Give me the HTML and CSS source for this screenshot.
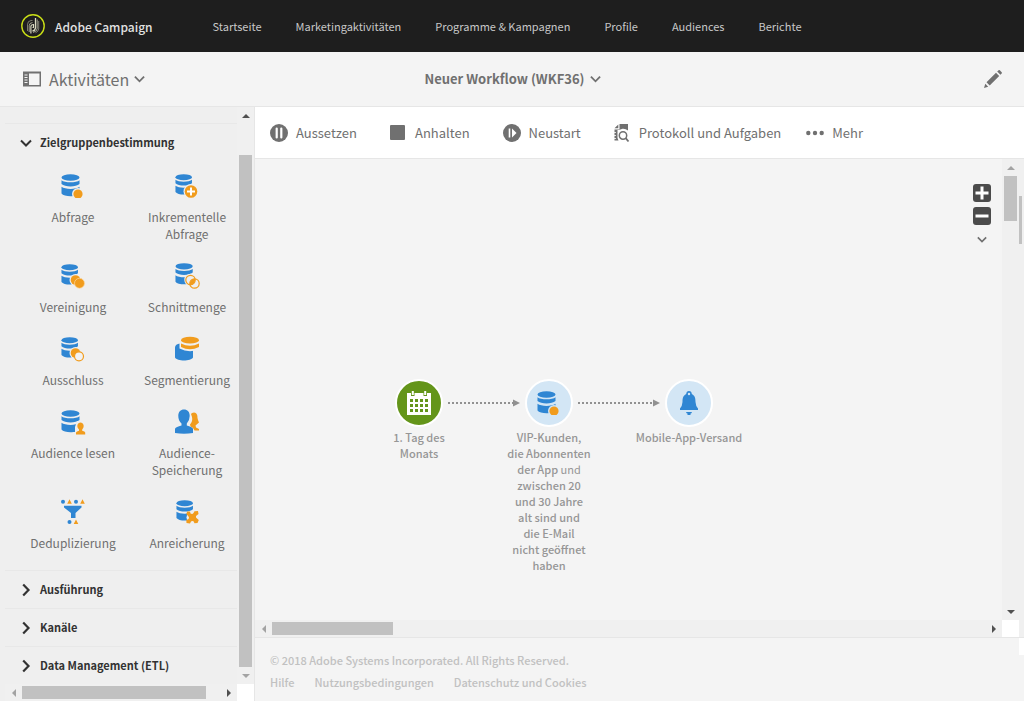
FILE: index.html
```html
<!DOCTYPE html>
<html lang="de">
<head>
<meta charset="utf-8">
<meta name="viewport" content="width=device-width, initial-scale=1">
<title>Adobe Campaign – Neuer Workflow (WKF36)</title>
<link rel="stylesheet" href="styles.css">
</head>
<body>
<svg class="sprite" aria-hidden="true">
  <symbol id="db" viewBox="0 0 24 24">
    <ellipse cx="9.500" cy="3.500" rx="9" ry="3.300" fill="#2f86d3"/>
    <path d="M.5 6.300C3.500 9 15.500 9 18.500 6.300V10C15 13.300 4 13.300.5 10Z" fill="#2f86d3"/>
    <path d="M.5 12.800C4 15.600 15 15.600 18.500 12.800V19.500C16 23.200 3 23.200.5 19.500Z" fill="#2f86d3"/>
  </symbol>
  <symbol id="chev-down" viewBox="0 0 12 8"><path d="M1 1.500l5 5 5-5" fill="none" stroke="currentColor" stroke-width="2"/></symbol>
  <symbol id="chev-right" viewBox="0 0 8 14"><path d="M1.200 1.500L6.500 7l-5.300 5.500" fill="none" stroke="currentColor" stroke-width="2.200"/></symbol>
  <symbol id="query" viewBox="0 0 24 24">
    <use href="#db" width="24" height="24"/>
    <circle class="halo" cx="17" cy="20" r="6"/><circle cx="17" cy="20" r="4.600" fill="#f19c1d"/>
  </symbol>
</svg>

<header class="topbar">
  <a class="brand" href="#">
    <svg class="brand-logo" viewBox="0 0 24 24" aria-hidden="true">
      <circle cx="12" cy="12" r="11.200" fill="none" stroke="#c9de17" stroke-width="1.400"/>
      <g fill="none" stroke="#d8d8c0">
        <path d="M6.500 17V10.500Q6.500 7 10 6.500H11.500" stroke-width=".5"/>
        <path d="M8.200 18V11.500Q8.200 9 11.500 8.500" stroke-width=".7"/>
        <path d="M9.900 19.500V12.500Q10 10.500 12.500 10.500V13.500H11.500" stroke-width="1.200"/>
        <path d="M14.500 4V14Q14 16.500 11.500 17" stroke-width="1.300"/>
        <path d="M16.200 5.500V14.500Q16 17.500 12 18.500" stroke-width=".7"/>
        <path d="M17.700 7V15Q17 18 14.500 18.800" stroke-width=".5"/>
      </g>
    </svg>
    <span>Adobe Campaign</span>
  </a>
  <nav class="nav">
    <a href="#">Startseite</a>
    <a href="#">Marketingaktivitäten</a>
    <a href="#">Programme &amp; Kampagnen</a>
    <a href="#">Profile</a>
    <a href="#">Audiences</a>
    <a href="#">Berichte</a>
  </nav>
</header>

<div class="subbar">
  <button class="rail-toggle" type="button">
    <svg class="icon-rail" viewBox="0 0 18 16" aria-hidden="true"><path d="M0 .5H18V15.500H0ZM6 2.500V14H16.500V2.500Z" fill="currentColor" fill-rule="evenodd"/><path d="M1.500 4H4.500M1.500 6.500H4.500M1.500 9H4.500M1.500 11.500H4.500" stroke="#f4f4f4"/></svg>
    <span>Aktivitäten</span>
    <svg class="chev" aria-hidden="true"><use href="#chev-down"/></svg>
  </button>
  <button class="title" type="button">
    <span>Neuer Workflow (WKF36)</span>
    <svg class="chev" aria-hidden="true"><use href="#chev-down"/></svg>
  </button>
  <button class="edit" type="button" aria-label="Bearbeiten">
    <svg class="icon18" viewBox="0 0 18 18" aria-hidden="true"><path d="M0 18L1.300 13.800 4.200 16.700ZM2.500 12.300L12 2.800 15.200 6 5.700 15.500ZM13.200 1.600L14.600.3Q15.200-.2 15.800.3L17.700 2.200Q18.200 2.800 17.700 3.400L16.400 4.800Z" fill="currentColor"/></svg>
  </button>
</div>

<div class="workspace">
  <aside class="sidebar">
    <div class="rail-edge"></div>
    <div class="palette">
      <section class="group">
        <button class="group-head" type="button"><svg class="chev-open" aria-hidden="true"><use href="#chev-down"/></svg><span>Zielgruppenbestimmung</span></button>
        <div class="activities">
          <button class="activity" type="button">
            <svg viewBox="0 0 24 26" aria-hidden="true"><use href="#query" width="24" height="24" y="1"/></svg>
            <span>Abfrage</span>
          </button>
          <button class="activity" type="button">
            <svg viewBox="0 0 24 26" aria-hidden="true"><use href="#db" width="22" height="22" y="1"/><circle class="halo" cx="16" cy="18.500" r="7.500"/><circle cx="16" cy="18.500" r="6.300" fill="#f19c1d"/><path d="M12 18.500H20M16 14.500V22.500" stroke="#fff" stroke-width="2"/></svg>
            <span>Inkrementelle Abfrage</span>
          </button>
          <button class="activity" type="button">
            <svg viewBox="0 0 24 26" aria-hidden="true"><use href="#db" width="22" height="22" y="1"/><circle class="halo" cx="14.500" cy="17" r="6"/><circle class="halo" cx="18.500" cy="20.500" r="6"/><circle cx="14.500" cy="17" r="4.800" fill="#f19c1d"/><circle cx="18.500" cy="20.300" r="5" fill="#f19c1d" stroke="#fbd9a5" stroke-width=".7"/></svg>
            <span>Vereinigung</span>
          </button>
          <button class="activity" type="button">
            <svg viewBox="0 0 24 26" aria-hidden="true"><use href="#db" width="23" height="23" y="0"/><circle class="halo" cx="15.500" cy="17" r="6.200"/><circle class="halo" cx="19.500" cy="20.500" r="6"/><path d="M14.950 21.670A4.700 4.700 0 0 1 20.050 15.830A4.700 4.700 0 0 1 14.950 21.670Z" fill="#f19c1d"/><g fill="none" stroke="#f19c1d" stroke-width="1.200"><circle cx="15.500" cy="17" r="4.700"/><circle cx="19.500" cy="20.500" r="4.700"/></g></svg>
            <span>Schnittmenge</span>
          </button>
          <button class="activity" type="button">
            <svg viewBox="0 0 24 26" aria-hidden="true"><use href="#db" width="22" height="22" y="1"/><circle class="halo" cx="14.500" cy="17" r="6"/><circle class="halo" cx="18" cy="20.300" r="5.800"/><circle cx="14.500" cy="17" r="4.800" fill="#f19c1d"/><circle cx="18" cy="20.300" r="4.500" fill="#f2f2f2" stroke="#f19c1d" stroke-width="1.200"/></svg>
            <span>Ausschluss</span>
          </button>
          <button class="activity" type="button">
            <svg viewBox="0 0 24 26" aria-hidden="true"><path d="M0 11.500C0 9 2 8 5 7.500V11Q9 14.500 18 14.500V21.500C16 25.500 2 25.500 0 21.500Z" fill="#2f86d3"/><path class="halo" d="M4.500 3H25.500V13Q14 17.500 4.500 12.500Z"/><ellipse cx="15" cy="4.200" rx="9" ry="3.400" fill="#f19c1d"/><path d="M6 7.500Q15 12 24 7.500V11Q15 15.500 6 11Z" fill="#f19c1d"/></svg>
            <span>Segmentierung</span>
          </button>
          <button class="activity" type="button">
            <svg viewBox="0 0 24 26" aria-hidden="true"><use href="#db" width="24" height="24" y="1"/><path class="halo" d="M14 26V18L16 12H22L25 26Z"/><path d="M15 25.500V23.500Q15.500 22.200 18 21.800V20.500C15 17.500 16.500 13.500 19.500 13.500S24 17.500 21.200 20.500V21.800Q24 22.200 24.200 23.500V25.500Z" fill="#f19c1d"/></svg>
            <span>Audience lesen</span>
          </button>
          <button class="activity" type="button">
            <svg viewBox="0 0 24 26" aria-hidden="true"><path d="M16 5Q16.500 3.500 19 3.500C22.500 4 22.500 7 22.500 9Q22.800 11 24 13.500L20.500 16.500 21 18.500 24 20V21.500H19.500Q18.500 18.500 15.500 17.500L15 15.500Q18 12 17 8Z" fill="#f19c1d"/><path d="M0 24V19.800Q1 17.800 6.500 16.500V14.500Q3.300 11.500 3.300 7C3.300 2.800 5.500.5 9 .5S14.700 2.800 14.700 7Q14.700 11.500 11.800 14.500V16.500Q17 17.800 18 19.800V24Q9 25.500 0 24Z" fill="#2f86d3"/></svg>
            <span>Audience-Speicherung</span>
          </button>
          <button class="activity" type="button">
            <svg viewBox="0 0 24 26" aria-hidden="true"><g fill="#2f86d3"><circle cx="2" cy="2.800" r="2"/><circle cx="15" cy="2.800" r="2"/><circle cx="8.500" cy="23" r="2"/><path d="M3 6.800H20.500V8.500L14.500 14V19H10V14L3 8.500Z"/></g><path d="M8.500.2L10.800 4.700H6.200ZM21.500.2L23.800 4.700H19.200ZM15 20.500L17.300 25H12.700Z" fill="#f19c1d"/></svg>
            <span>Deduplizierung</span>
          </button>
          <button class="activity" type="button">
            <svg viewBox="0 0 24 26" aria-hidden="true"><use href="#db" width="22" height="22" x="1" y="1"/><circle class="halo" cx="17.500" cy="18.500" r="6"/><path d="M12.200 12.500L15 12.500 15.500 14.500Q17.500 15.500 18.500 14L19.500 12.200 23 12 23.500 15 21 17Q20.500 18.500 22 19.500L23.800 21 22.500 24 19.500 24.200 18.500 22.200Q17 21.500 16 22.500L15 24.500 11.500 24 11.300 21 13.500 20Q14.500 18.500 13.500 17.500L11.300 15Z" fill="#f19c1d"/></svg>
            <span>Anreicherung</span>
          </button>
        </div>
      </section>
      <button class="group-head" type="button"><svg class="chev-closed" aria-hidden="true"><use href="#chev-right"/></svg><span>Ausführung</span></button>
      <button class="group-head" type="button"><svg class="chev-closed" aria-hidden="true"><use href="#chev-right"/></svg><span>Kanäle</span></button>
      <button class="group-head" type="button"><svg class="chev-closed" aria-hidden="true"><use href="#chev-right"/></svg><span>Data Management (ETL)</span></button>
    </div>
    <div class="vscroll"><i class="arrow up dark"></i><div class="track"><div class="thumb side-v"></div></div><i class="arrow down"></i></div>
    <div class="hscroll"><i class="arrow left"></i><div class="track"><div class="thumb side-h"></div></div><i class="arrow right dark"></i></div>
    <div class="corner"></div>
  </aside>

  <main class="main">
    <div class="toolbar">
      <button class="tool" type="button"><svg class="icon18" viewBox="0 0 18 18" aria-hidden="true"><circle cx="9" cy="9" r="9" fill="currentColor"/><path d="M6.700 4.500V13.500M11.300 4.500V13.500" stroke="#fff" stroke-width="2.200" stroke-linecap="round"/></svg><span>Aussetzen</span></button>
      <button class="tool narrow" type="button"><svg class="icon15" viewBox="0 0 15 15" aria-hidden="true"><rect width="15" height="15" rx="1" fill="currentColor"/></svg><span>Anhalten</span></button>
      <button class="tool" type="button"><svg class="icon18" viewBox="0 0 18 18" aria-hidden="true"><circle cx="9" cy="9" r="9" fill="currentColor"/><path d="M6.500 4.500V13.500" stroke="#fff" stroke-width="1.600"/><path d="M9 4.500L13.500 9 9 13.500Z" fill="#fff"/></svg><span>Neustart</span></button>
      <button class="tool narrow log" type="button"><svg class="icon-log" viewBox="0 0 15 18" aria-hidden="true"><path d="M5.500 0H14V6.500Q11.500 4.500 8.500 4.800L5 6H3.500V10Q3 14 4.500 16.500H.5V5.500H5.500ZM4.300.5V4.300H.5Z" fill="currentColor"/><path d="M0 8.500H2M0 11.500H2M0 14.500H2" stroke="#fff" stroke-width=".8"/><circle cx="9" cy="11.500" r="3.700" fill="#fff" stroke="currentColor" stroke-width="1.500"/><path d="M11.700 14.200L14.500 17.500" stroke="currentColor" stroke-width="1.800"/></svg><span>Protokoll und Aufgaben</span></button>
      <button class="tool" type="button"><svg class="icon-more" viewBox="0 0 18 6" aria-hidden="true"><g fill="currentColor"><circle cx="2.300" cy="3" r="2.200"/><circle cx="9" cy="3" r="2.200"/><circle cx="15.700" cy="3" r="2.200"/></g></svg><span>Mehr</span></button>
    </div>

    <div class="viewport">
      <div class="canvas">
        <svg class="link link-1" viewBox="0 0 72 8" aria-hidden="true"><path d="M0 4H66" stroke="#919191" stroke-width="2" stroke-dasharray="2 2"/><path d="M65 .5L72 4 65 7.500Z" fill="#919191"/></svg>
        <svg class="link link-2" viewBox="0 0 82 8" aria-hidden="true"><path d="M0 4H76" stroke="#919191" stroke-width="2" stroke-dasharray="2 2"/><path d="M75 .5L82 4 75 7.500Z" fill="#919191"/></svg>
        <figure class="node node-schedule">
          <div class="disc green"><svg class="icon24" viewBox="0 0 24 24" aria-hidden="true"><path d="M0 2H4V5H7.500V2H16.500V5H20V2H24V24H0Z" fill="#fff"/><path d="M4.800 0H6.800V4H4.800ZM17.200 0H19.200V4H17.200Z" fill="#fff"/><path d="M3 9.500H21M3 14.500H21M3 19.500H21" stroke="#64951a" stroke-width="3" stroke-dasharray="3 2"/></svg></div>
          <figcaption>1. Tag des<br>Monats</figcaption>
        </figure>
        <figure class="node node-query">
          <div class="disc blue"><svg class="icon24" viewBox="0 0 24 24" aria-hidden="true"><use href="#query" width="24" height="24"/></svg></div>
          <figcaption>VIP-Kunden,<br>die Abonnenten<br>der App <span class="thin">und</span><br>zwischen 20<br>und 30 Jahre<br>alt sind und<br>die E-Mail<br>nicht geöffnet<br>haben</figcaption>
        </figure>
        <figure class="node node-push">
          <div class="disc blue"><svg class="icon24" viewBox="0 0 24 24" aria-hidden="true"><path d="M12 0Q14.600 0 14.800 3C18 4.500 18.500 7.500 18.500 11Q18.700 15 21 17.500V19H3V17.500Q5.300 15 5.500 11C5.500 7.500 6 4.500 9.200 3Q9.400 0 12 0ZM9 21H15Q14.500 22.500 13.500 22.500V24H10.500V22.500Q9.500 22.500 9 21Z" fill="#2f86d3"/><circle cx="12" cy="3" r="1.200" fill="#d3e6f5"/></svg></div>
          <figcaption>Mobile-App-Versand</figcaption>
        </figure>
        <div class="zoom">
          <button type="button" aria-label="Vergrößern"><svg viewBox="0 0 18 18" aria-hidden="true"><path d="M2.500 9H15.500M9 2.500V15.500" stroke="#fff" stroke-width="3"/></svg></button>
          <button type="button" aria-label="Verkleinern"><svg viewBox="0 0 18 18" aria-hidden="true"><path d="M2.500 9H15.500" stroke="#fff" stroke-width="3"/></svg></button>
          <button class="expand" type="button" aria-label="Mehr anzeigen"><svg class="chev" aria-hidden="true"><use href="#chev-down"/></svg></button>
        </div>
      </div>
      <div class="vscroll"><i class="arrow up"></i><div class="track"><div class="thumb canvas-v"></div></div><i class="arrow down dark"></i></div>
      <div class="hscroll"><i class="arrow left"></i><div class="track"><div class="thumb canvas-h"></div></div><i class="arrow right dark"></i></div>
      <div class="corner"></div>
      <div class="gutter"><div class="thumb outer-v"></div></div>
    </div>

    <footer class="footer">
      <div class="footer-end"></div>
      <p>© 2018 Adobe Systems Incorporated. All Rights Reserved.</p>
      <nav class="footer-links"><a href="#">Hilfe</a><a href="#">Nutzungsbedingungen</a><a href="#">Datenschutz und Cookies</a></nav>
    </footer>
  </main>
</div>
</body>
</html>
```
FILE: styles.css
```css
* { box-sizing: border-box; }
body {
  margin: 0;
  min-height: 100vh;
  display: grid;
  grid-template-rows: auto auto 1fr;
  background: #f4f4f4;
  color: #707070;
  font: 12px/17px "Noto Sans CJK SC", "Open Sans", sans-serif;
}
button {
  margin: 0;
  padding: 0;
  border: 0;
  background: none;
  color: inherit;
  font: inherit;
  cursor: pointer;
}
a { color: inherit; text-decoration: none; }
svg { display: block; flex: none; overflow: visible; }
.sprite { position: absolute; width: 0; height: 0; }
.halo { fill: var(--halo, #efefef); }
.icon15 { width: 15px; height: 15px; }
.icon18 { width: 18px; height: 18px; }
.icon24 { width: 24px; height: 24px; }
.chev { width: 11px; height: 8px; }

.topbar {
  display: flex;
  align-items: center;
  gap: 60px;
  height: 52px;
  padding: 0 21px;
  background: #1e1e1e;
  color: #c8c8c8;
}
.brand {
  display: flex;
  align-items: center;
  gap: 10px;
  color: #e2e2e2;
  font-weight: 500;
}
.brand-logo { width: 24px; height: 24px; }
.nav { display: flex; gap: 34px; font-size: 11px; }

.subbar {
  display: grid;
  grid-template-columns: 1fr auto 1fr;
  align-items: center;
  height: 55px;
  padding: 0 22px 0 23px;
  border-bottom: 1px solid #e6e6e6;
}
.rail-toggle, .title { display: flex; align-items: center; gap: 5px; }
.rail-toggle { justify-self: start; font-size: 16px; line-height: 24px; }
.rail-toggle span { margin-left: 3px; }
.icon-rail { width: 18px; height: 16px; }
.title { font-size: 13px; line-height: 20px; font-weight: 700; }
.edit { justify-self: end; }

.workspace { display: grid; grid-template-columns: 255px 1fr; min-width: 0; }

.sidebar {
  display: grid;
  grid-template-columns: 5px 1fr 17px;
  grid-template-rows: 1fr 17px;
  border-right: 1px solid #e6e6e6;
  background: #efefef;
}
.rail-edge { grid-row: 1 / 3; }
.palette { padding-top: 16px; }
.group-head {
  display: flex;
  align-items: center;
  gap: 8px;
  width: 100%;
  height: 38px;
  padding-left: 15px;
  border-top: 1px solid #e8e8e8;
  color: #323232;
  font-weight: 700;
  font-size: 11px;
}
.chev-open { width: 12px; height: 8px; }
.chev-closed { width: 12px; height: 14px; }
.activities {
  display: grid;
  grid-template-columns: 114px 1fr;
  column-gap: 7px;
  padding: 4px 0 6px 11px;
}
.activity {
  display: flex;
  flex-direction: column;
  align-items: center;
  justify-content: flex-start;
  gap: 9px;
  padding: 8px 0 13px;
}
.activity svg { width: 24px; height: 26px; }

.vscroll, .hscroll { display: flex; align-items: center; background: #f0f0f0; }
.vscroll { flex-direction: column; width: 17px; }
.hscroll { height: 17px; }
.track { flex: 1; }
.vscroll .track { width: 13px; }
.hscroll .track { height: 13px; }
.thumb { background: #c1c1c1; }
.arrow { width: 17px; height: 17px; display: grid; place-items: center; color: #a3a3a3; flex: none; }
.arrow.dark { color: #505050; }
.arrow::before { content: ""; border: 4px solid transparent; }
.up::before { border-top: 0; border-bottom-color: currentColor; }
.down::before { border-bottom: 0; border-top-color: currentColor; }
.left::before { border-left: 0; border-right-color: currentColor; }
.right::before { border-right: 0; border-left-color: currentColor; }
.corner { background: #fff; }
.side-v { height: 512px; margin-top: 31px; }
.side-h { width: 93%; height: 13px; }
.canvas-v { height: 45px; }
.canvas-h { width: 121px; height: 13px; }
.outer-v { width: 3px; height: 48px; margin-top: 37px; }

.main { display: grid; grid-template-rows: auto 1fr auto; min-width: 0; }
.toolbar {
  display: flex;
  align-items: center;
  gap: 33px;
  height: 52px;
  padding-left: 15px;
  border-bottom: 1px solid #e6e6e6;
  background: #fff;
  font-size: 13px;
  line-height: 20px;
}
.tool { display: flex; align-items: center; gap: 8px; }
.tool.narrow { gap: 10px; }
.tool.log { margin-right: -8px; }
.icon-log { width: 15px; height: 18px; }
.icon-more { width: 18px; height: 6px; }

.viewport {
  display: grid;
  grid-template-columns: 1fr 17px 5px;
  grid-template-rows: 1fr 17px;
}
.canvas { position: relative; overflow: hidden; }
.gutter { grid-column: 3; grid-row: 1 / 3; background: #f0f0f0; }

.node {
  position: absolute;
  top: 220px;
  display: flex;
  flex-direction: column;
  align-items: center;
  width: 120px;
  margin: 0;
  color: #969696;
  font-size: 11px;
  line-height: 16px;
  text-align: center;
}
.node figcaption { margin-top: 2px; font-weight: 500; }
.node-schedule { left: 104px; }
.node-query { left: 234px; }
.node-push { left: 374px; }
.thin { font-weight: 400; }
.disc {
  display: grid;
  place-items: center;
  width: 48px;
  height: 48px;
  border: 2px solid #fff;
  border-radius: 50%;
}
.green { background: #64951a; }
.blue { --halo: #d3e6f5; background: #d3e6f5; }
.link { position: absolute; top: 240px; height: 8px; }
.link-1 { left: 193px; width: 72px; }
.link-2 { left: 323px; width: 82px; }

.zoom {
  position: absolute;
  top: 25px;
  right: 11px;
  display: flex;
  flex-direction: column;
  gap: 5px;
}
.zoom button {
  display: grid;
  place-items: center;
  width: 18px;
  height: 18px;
  border-radius: 3px;
  background: #4b4b4b;
}
.zoom svg { width: 18px; height: 18px; }
.zoom .expand { background: none; }
.zoom .chev { width: 10px; height: 7px; }

.footer {
  position: relative;
  height: 64px;
  padding: 14px 15px;
  border-top: 1px solid #e6e6e6;
  color: #c1c1c1;
  font-size: 11px;
  font-weight: 500;
}
.footer p { margin: 0 0 5px; }
.footer-links { display: flex; gap: 20px; }
.footer-end {
  position: absolute;
  top: 0;
  right: 0;
  width: 5px;
  height: 17px;
  background: #fff;
}
```
